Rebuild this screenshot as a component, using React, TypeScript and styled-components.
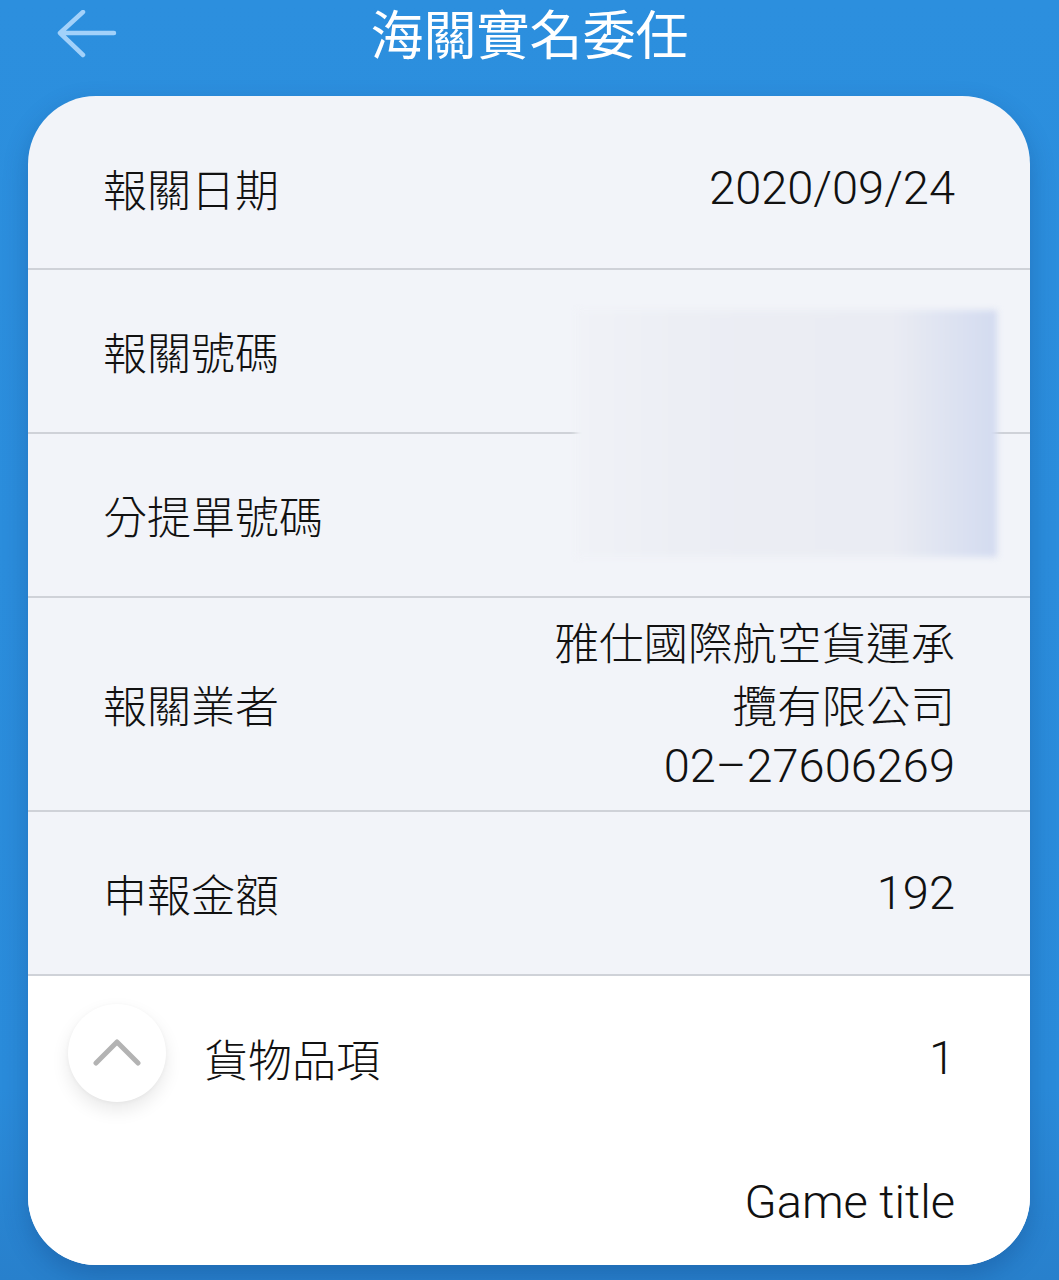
import React from "react";
import styled, { createGlobalStyle } from "styled-components";

const GlobalStyle = createGlobalStyle`
  html, body {
    margin: 0;
    padding: 0;
    background: #2b8ddc;
  }
  body {
    font-family: Roboto, "Noto Sans CJK TC", "Noto Sans", sans-serif;
    color: #151515;
  }
`;

const Page = styled.div`
  width: 1059px;
  height: 1280px;
  overflow: hidden;
  background: linear-gradient(180deg, #2c8fde 0%, #2a8bda 85%, #2880cc 100%);
  display: flex;
  flex-direction: column;
`;

const Header = styled.header`
  height: 96px;
  display: grid;
  grid-template-columns: 1fr auto 1fr;
  align-items: start;
`;

const BackButton = styled.button`
  justify-self: start;
  margin: 10px 0 0 56px;
  padding: 0;
  border: 0;
  background: transparent;
  width: 62px;
  height: 48px;
  display: flex;
`;

const Title = styled.h1`
  margin: 4px 0 0;
  font-family: "Noto Sans CJK TC", sans-serif;
  font-weight: 400;
  font-size: 53px;
  line-height: 56px;
  color: #ffffff;
  letter-spacing: 0;
`;

const Card = styled.main`
  position: relative;
  margin: 0 29px 0 28px;
  height: 1169px;
  background: #f2f4f9;
  border-radius: 68px;
  overflow: hidden;
  box-shadow: 0 10px 24px rgba(10, 50, 110, 0.28);
  display: flex;
  flex-direction: column;
`;

const Row = styled.div<{ $min?: number; $padTop?: number }>`
  min-height: ${(p) => p.$min ?? 162}px;
  box-sizing: border-box;
  padding: ${(p) => p.$padTop ?? 0}px 75px 0 75px;
  display: flex;
  align-items: center;
  justify-content: space-between;
  border-bottom: 2px solid #cfd2d8;
`;

const Label = styled.span`
  font-family: "Noto Sans CJK TC", sans-serif;
  font-weight: 300;
  font-size: 44px;
  line-height: 62px;
  color: #111111;
  white-space: nowrap;
`;

const Value = styled.span<{ $cjk?: boolean }>`
  font-family: ${(p) =>
    p.$cjk ? '"Noto Sans CJK TC", sans-serif' : 'Roboto, "Noto Sans CJK TC", sans-serif'};
  font-weight: 300;
  font-size: ${(p) => (p.$cjk ? 44.5 : 47)}px;
  line-height: 62.5px;
  color: #111111;
  text-align: right;
`;

const ValueStack = styled.div`
  display: flex;
  flex-direction: column;
  align-items: flex-end;
  max-width: 410px;
  text-align: right;
`;

const MaskedBlock = styled.div`
  position: absolute;
  left: 548px;
  top: 214px;
  width: 421px;
  height: 247px;
  background: linear-gradient(90deg, #f0f2f7 0%, #eceef4 25%, #eaecf3 75%, #d3dbf0 100%);
  filter: blur(3px);
`;

const Items = styled.section`
  flex: 1;
  background: #ffffff;
  padding: 28px 75px 0 40px;
  display: flex;
  flex-direction: column;
`;

const ItemsHead = styled.div`
  display: flex;
  align-items: center;
  gap: 38px;
`;

const ToggleButton = styled.button`
  width: 98px;
  height: 98px;
  border-radius: 50%;
  border: 0;
  padding: 0;
  background: #ffffff;
  box-shadow: 0 8px 18px rgba(0, 0, 0, 0.09), 0 1px 4px rgba(0, 0, 0, 0.04);
  display: flex;
  align-items: center;
  justify-content: center;
  flex-shrink: 0;
`;

const ItemsLabel = styled(Label)`
  padding-top: 10px;
  flex: 1;
`;

const ItemsCount = styled(Value)`
  padding-top: 10px;
`;

const GameTitle = styled(Value)`
  align-self: flex-end;
  margin-top: 70px;
  line-height: 60px;
`;

export default function App() {
  return (
    <Page>
      <GlobalStyle />
      <Header>
        <BackButton aria-label="back">
          <svg width="62" height="48" viewBox="0 0 62 48">
            <path
              d="M58 23 H5 M27 2 L4 23 L27 45"
              fill="none"
              stroke="#a2d1fa"
              strokeWidth="4.5"
              strokeLinecap="round"
              strokeLinejoin="round"
            />
          </svg>
        </BackButton>
        <Title>海關實名委任</Title>
        <span />
      </Header>
      <Card>
        <Row $min={174} $padTop={12}>
          <Label>報關日期</Label>
          <Value>2020/09/24</Value>
        </Row>
        <Row $min={164}>
          <Label>報關號碼</Label>
        </Row>
        <Row $min={164}>
          <Label>分提單號碼</Label>
        </Row>
        <Row $min={214}>
          <Label>報關業者</Label>
          <ValueStack>
            <Value $cjk>雅仕國際航空貨運承攬有限公司</Value>
            <Value>02–27606269</Value>
          </ValueStack>
        </Row>
        <Row $min={164}>
          <Label>申報金額</Label>
          <Value>192</Value>
        </Row>
        <Items>
          <ItemsHead>
            <ToggleButton aria-label="collapse">
              <svg width="48" height="30" viewBox="0 0 48 30">
                <path
                  d="M3 25 L24 4 L45 25"
                  fill="none"
                  stroke="#b3b3b3"
                  strokeWidth="5"
                  strokeLinecap="round"
                  strokeLinejoin="round"
                />
              </svg>
            </ToggleButton>
            <ItemsLabel>貨物品項</ItemsLabel>
            <ItemsCount>1</ItemsCount>
          </ItemsHead>
          <GameTitle>Game title</GameTitle>
        </Items>
        <MaskedBlock />
      </Card>
    </Page>
  );
}
